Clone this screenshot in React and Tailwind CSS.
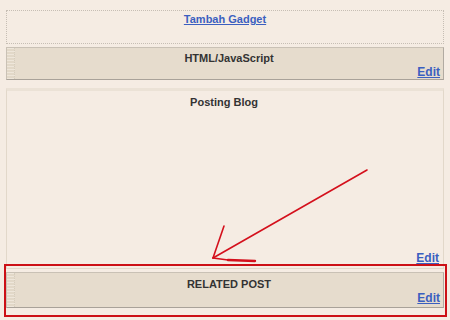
import React from 'react';

const font = { fontFamily: '"Liberation Sans", Arial, sans-serif' };

const EditLink = () => (
  <a href="#" className="text-[12px] font-bold leading-[14px] text-[#3b5fc0] underline">
    Edit
  </a>
);

const Grip = () => (
  <div className="w-[8px] self-stretch border-r border-dotted border-[#d6cdbd] bg-[repeating-linear-gradient(0deg,#eee6da_0px,#eee6da_1px,#e2d8c8_1px,#e2d8c8_3px)]" />
);

const GadgetBox = ({ title, height, titlePad }) => (
  <div className={`flex ${height} border border-[#c9c1b5] border-b-[#a9a299] border-r-[#b1aaa1] bg-[#e6dccd]`}>
    <Grip />
    <div className="flex flex-1 flex-col">
      <div className={`${titlePad} text-center text-[11px] font-bold leading-[14px] text-[#333]`}>
        {title}
      </div>
      <div className="mt-auto flex justify-end pb-[2px] pr-[3px]">
        <EditLink />
      </div>
    </div>
  </div>
);

export default function App() {
  return (
    <div className="relative h-[320px] w-[450px] overflow-hidden bg-[#f5ece3]" style={font}>
      <div className="flex flex-col px-[6px] pt-[10px]">
        {/* tambah gadget */}
        <div className="h-[34px] border border-dotted border-[#c6beb4] pt-[1px] text-center text-[11px] leading-[14px]">
          <a href="#" className="font-bold text-[#3b5fc0] underline">
            Tambah Gadget
          </a>
        </div>

        <div className="mt-[3px]">
          <GadgetBox title="HTML/JavaScript" height="h-[33px]" titlePad="pt-[3px]" />
        </div>

        {/* posting blog */}
        <div className="mt-[8px] flex h-[181px] flex-col border border-[#e2d8ca] border-t-[3px] border-t-[#ebe2d6] pr-[2px]">
          <div className="pt-[4px] text-center text-[11px] font-bold leading-[14px] text-[#333]">
            Posting Blog
          </div>
          <div className="mt-auto flex justify-end pb-[3px] pr-[2px]">
            <EditLink />
          </div>
        </div>

        <div className="mt-[3px]">
          <GadgetBox title="RELATED POST" height="h-[36px]" titlePad="pt-[4px]" />
        </div>
      </div>

      {/* highlight + arrow annotation */}
      <div className="absolute left-[4px] top-[264px] h-[53px] w-[443px] border-2 border-[#cc1016]" />
      <svg className="absolute left-0 top-0" width="450" height="320" viewBox="0 0 450 320">
        <g stroke="#d4101c" strokeWidth="1.6" fill="none" strokeLinecap="round">
          <line x1="367" y1="170" x2="213" y2="258" />
          <line x1="213" y1="258" x2="224" y2="226" />
          <line x1="213" y1="258" x2="228" y2="260" />
          <line x1="228" y1="260" x2="255" y2="261" strokeWidth="2.4" />
        </g>
      </svg>
    </div>
  );
}
